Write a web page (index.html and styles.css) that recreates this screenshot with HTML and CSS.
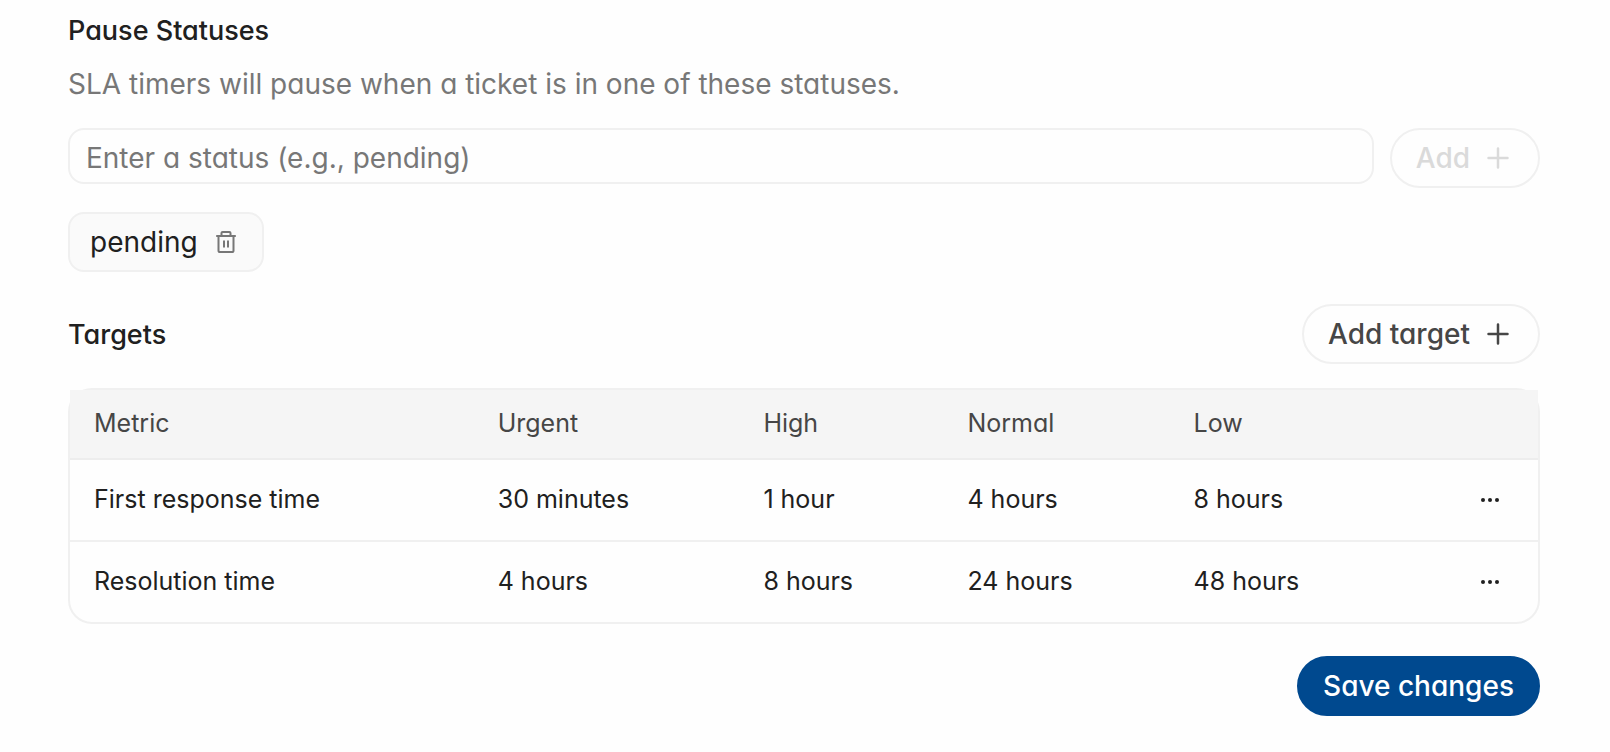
FILE: index.html
```html
<!DOCTYPE html>
<html lang="en">
<head>
<meta charset="utf-8">
<title>SLA policy</title>
<link rel="stylesheet" href="styles.css">
</head>
<body>
<form class="policy">
  <section class="pause">
    <h2 class="heading"><label for="status">Pause Statuses</label></h2>
    <p class="description">SLA timers will pause when a ticket is in one of these statuses.</p>
    <div class="status-row">
      <input class="status-input" id="status" type="text" placeholder="Enter a status (e.g., pending)">
      <button class="button button-outline" type="button" disabled>Add
        <svg class="icon-plus" viewBox="0 0 32 32" aria-hidden="true"><path d="M16 6.500v19M6.500 16h19"/></svg>
      </button>
    </div>
    <div class="chip">
      <span>pending</span>
      <button class="chip-remove" type="button" aria-label="Remove pending">
        <svg class="icon-trash" viewBox="0 0 24 24" aria-hidden="true"><path d="M2.200 6h19.600M4.500 6v14.500q0 1.600 1.600 1.600h11.800q1.600 0 1.600-1.600V6M7.500 6V3q0-1.100 1.100-1.100h6.800q1.100 0 1.100 1.100V6M10 10.500v7M14 10.500v7"/></svg>
      </button>
    </div>
  </section>

  <section class="targets">
    <div class="targets-head">
      <h2 class="heading">Targets</h2>
      <button class="button button-outline" type="button">Add target
        <svg class="icon-plus" viewBox="0 0 32 32" aria-hidden="true"><path d="M16 6.500v19M6.500 16h19"/></svg>
      </button>
    </div>
    <div class="table-frame">
      <table class="table">
        <colgroup>
          <col class="col-metric"><col class="col-urgent"><col class="col-high"><col class="col-normal"><col class="col-low"><col class="col-menu">
        </colgroup>
        <thead>
          <tr><th>Metric</th><th>Urgent</th><th>High</th><th>Normal</th><th>Low</th><th></th></tr>
        </thead>
        <tbody>
          <tr>
            <td>First response time</td><td>30 minutes</td><td>1 hour</td><td>4 hours</td><td>8 hours</td>
            <td class="cell-menu"><button class="menu" type="button" aria-label="First response time options"><svg class="icon-dots" viewBox="0 0 20 4" aria-hidden="true"><circle cx="3" cy="2" r="2"/><circle cx="10" cy="2" r="2"/><circle cx="17" cy="2" r="2"/></svg></button></td>
          </tr>
          <tr>
            <td>Resolution time</td><td>4 hours</td><td>8 hours</td><td>24 hours</td><td>48 hours</td>
            <td class="cell-menu"><button class="menu" type="button" aria-label="Resolution time options"><svg class="icon-dots" viewBox="0 0 20 4" aria-hidden="true"><circle cx="3" cy="2" r="2"/><circle cx="10" cy="2" r="2"/><circle cx="17" cy="2" r="2"/></svg></button></td>
          </tr>
        </tbody>
      </table>
    </div>
  </section>

  <div class="actions">
    <button class="button button-primary" type="submit">Save changes</button>
  </div>
</form>
</body>
</html>
```
FILE: styles.css
```css
* {
  box-sizing: border-box;
}

body {
  margin: 0;
  background: #fefefe;
  color: #202020;
  font-family: Inter, "Liberation Sans", sans-serif;
  font-feature-settings: "cv11";
  font-size: 28px;
  line-height: 40px;
}

button,
input {
  font: inherit;
  font-feature-settings: inherit;
}

.policy {
  display: flex;
  flex-direction: column;
  gap: 32px;
  padding: 12px 70px 36px 68px;
}

.pause {
  display: flex;
  flex-direction: column;
}

.heading {
  margin: 0;
  font-size: 27px;
  font-weight: 500;
  line-height: 38px;
}

.description {
  margin: 14px 0 24px;
  color: #777;
}

.status-row {
  display: flex;
  align-items: flex-start;
  gap: 16px;
}

.status-input {
  flex: 1;
  min-width: 0;
  height: 56px;
  padding: 4px 16px 0;
  border: 2px solid #f0f0f0;
  border-radius: 16px;
  background: #fefefe;
  color: #202020;
}

.status-input::placeholder {
  color: #777;
  opacity: 1;
}

.button {
  display: inline-flex;
  align-items: center;
  gap: 12px;
  height: 60px;
  padding: 0 24px;
  border: 2px solid transparent;
  border-radius: 30px;
  font-weight: 500;
  white-space: nowrap;
}

.button-outline {
  border-color: #f0f0f0;
  background: #fefefe;
  color: #464646;
}

.button-outline:disabled {
  color: #dadada;
}

.button-primary {
  border-color: #00498f;
  background: #00498f;
  color: #fff;
}

.icon-plus {
  width: 32px;
  height: 32px;
  fill: none;
  stroke: currentColor;
  stroke-width: 2.5;
  stroke-linecap: round;
}

.chip {
  display: flex;
  align-items: center;
  align-self: flex-start;
  gap: 16px;
  height: 60px;
  margin-top: 24px;
  padding: 0 24px 0 20px;
  border: 2px solid #f0f0f0;
  border-radius: 16px;
  background: #fafafa;
}

.chip-remove {
  display: flex;
  padding: 0;
  border: 0;
  background: none;
  color: #777;
}

.icon-trash {
  width: 24px;
  height: 24px;
  fill: none;
  stroke: currentColor;
  stroke-width: 2;
  stroke-linejoin: round;
}

.targets {
  display: flex;
  flex-direction: column;
  gap: 24px;
}

.targets-head {
  display: flex;
  align-items: center;
  justify-content: space-between;
}

.targets-head .heading {
  padding-top: 2px;
}

.table-frame {
  border: 2px solid #f0f0f0;
  border-radius: 24px;
}

.table {
  width: 100%;
  table-layout: fixed;
  border-collapse: separate;
  border-spacing: 0;
  font-size: 25px;
  line-height: 36px;
}

.table th,
.table td {
  padding: 0 24px 2px;
  text-align: left;
}

.table th {
  height: 70px;
  border-bottom: 2px solid #ededed;
  background: #f5f5f5;
  color: #464646;
  font-weight: 400;
}

.table td {
  height: 80px;
}

.table tr:not(:last-child) td {
  height: 82px;
  border-bottom: 2px solid #f0f0f0;
}

.col-metric {
  width: 27.5%;
}

.col-urgent {
  width: 18.1%;
}

.col-high {
  width: 13.9%;
}

.col-normal {
  width: 15.4%;
}

.col-low {
  width: 16%;
}

.table .cell-menu {
  padding: 0 38px 0 24px;
}

.menu {
  display: flex;
  align-items: center;
  height: 48px;
  margin-left: auto;
  padding: 0;
  border: 0;
  background: none;
  color: #202020;
}

.icon-dots {
  width: 20px;
  height: 4px;
  fill: currentColor;
}

.actions {
  display: flex;
  justify-content: flex-end;
}
```
